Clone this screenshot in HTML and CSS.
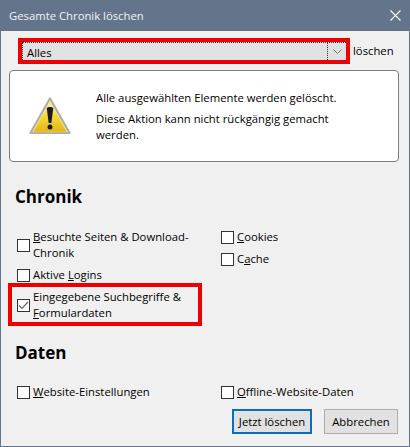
FILE: index.html
```html
<!DOCTYPE html>
<html lang="de">
<head>
    <title>Gesamte Chronik löschen</title>
    <meta charset="UTF-8">
    <link rel="stylesheet" href="styles.css">
</head>
<body>
    <div class="window">
        <div class="titlebar">
            <span>Gesamte Chronik löschen</span>
            <svg class="close" width="11" height="11" viewBox="0 0 11 11"><path d="M0.5 0.5L10.5 10.5M10.5 0.5L0.5 10.5" stroke="#fff" stroke-width="1.1" fill="none"/></svg>
        </div>
        <div class="content">
            <div class="range_row">
                <div class="red_frame range_frame">
                    <div class="select">
                        <div class="select_value">Alles</div>
                        <div class="select_arrow">
                            <svg width="9" height="5" viewBox="0 0 9 5"><path d="M0.5 0.5L4.5 4.5L8.5 0.5" stroke="#777" fill="none"/></svg>
                        </div>
                    </div>
                </div>
                <span class="range_label">löschen</span>
            </div>

            <div class="warning">
                <svg class="warning_icon" width="44" height="40" viewBox="0 0 44 40">
                    <defs>
                        <linearGradient id="warn_fill" x1="0" y1="0" x2="0" y2="1">
                            <stop offset="0" stop-color="#fdf3b0"/>
                            <stop offset="0.45" stop-color="#f6dc38"/>
                            <stop offset="1" stop-color="#e3b614"/>
                        </linearGradient>
                    </defs>
                    <path d="M22 2.5L41.5 37H2.5Z" fill="#fff" stroke="#b0ac9e" stroke-width="2.2" stroke-linejoin="round"/>
                    <path d="M22 5.5L39 36H5Z" fill="url(#warn_fill)" stroke="#e8d88a" stroke-width="0.6" stroke-linejoin="round"/>
                    <path d="M18.8 12.5C18.8 10.5 25.2 10.5 25.2 12.5L23.4 27H20.6Z" fill="#1c1c1c"/>
                    <circle cx="22" cy="31" r="2.5" fill="#1c1c1c"/>
                </svg>
                <div class="warning_text">
                    <p>Alle ausgewählten Elemente werden gelöscht.</p>
                    <p>Diese Aktion kann nicht rückgängig gemacht werden.</p>
                </div>
            </div>

            <h2 class="chronik_title">Chronik</h2>
            <div class="options">
                <div class="col_left">
                    <label class="option"><span class="check"></span><span class="opt_text"><u>B</u>esuchte Seiten &amp; Download-Chronik</span></label>
                    <label class="option"><span class="check"></span><span class="opt_text">Aktive <u>L</u>ogins</span></label>
                    <div class="red_frame form_frame">
                        <label class="option"><span class="check">
                            <svg width="13" height="13" viewBox="0 0 13 13"><path d="M2 6.5L5 9.5L11 3" stroke="#666" stroke-width="1.2" fill="none"/></svg>
                        </span><span class="opt_text">Eingegebene Suchbegriffe &amp; <u>F</u>ormulardaten</span></label>
                    </div>
                </div>
                <div class="col_right">
                    <label class="option"><span class="check"></span><span class="opt_text"><u>C</u>ookies</span></label>
                    <label class="option"><span class="check"></span><span class="opt_text">C<u>a</u>che</span></label>
                </div>
            </div>

            <h2 class="daten_title">Daten</h2>
            <div class="options">
                <div class="col_left">
                    <label class="option"><span class="check"></span><span class="opt_text"><u>W</u>ebsite-Einstellungen</span></label>
                </div>
                <div class="col_right">
                    <label class="option"><span class="check"></span><span class="opt_text"><u>O</u>ffline-Website-Daten</span></label>
                </div>
            </div>

            <div class="buttons">
                <button class="btn btn_default">Jetzt löschen</button>
                <button class="btn">Abbrechen</button>
            </div>
        </div>
    </div>
</body>
</html>
```

FILE: styles.css
```css
* {
    box-sizing: border-box;
}

html, body {
    margin: 0;
    height: 100%;
}

body {
    font-family: "Open Sans", "Noto Sans", sans-serif;
    font-size: 11.3px;
    color: #000;
}

.window {
    width: 410px;
    height: 447px;
    display: flex;
    flex-direction: column;
    background-color: #f0f0f0;
    border: 1px solid #64748a;
    border-top: none;
}

.titlebar {
    height: 31px;
    flex: none;
    margin: 0 -1px;
    padding: 0 9px;
    display: flex;
    align-items: center;
    justify-content: space-between;
    background-color: #64748a;
    color: #f2f4f6;
}

.content {
    flex: 1;
    padding: 7px 10px 0 8px;
}

.red_frame {
    border: 4px solid #ee0000;
}

.range_row {
    display: flex;
    align-items: center;
    gap: 3px;
    padding-left: 9px;
}

.range_frame {
    width: 332px;
    height: 26px;
}

.select {
    height: 100%;
    display: flex;
    background-color: #e1e1e1;
    border-left: 1px dotted #333;
    border-top: 1px dotted #333;
}

.select_value {
    flex: 1;
    padding-left: 4px;
    line-height: 19px;
    border-right: 1px dotted #333;
}

.select_arrow {
    width: 18px;
    display: flex;
    align-items: center;
    justify-content: center;
}

.range_label {
    margin-top: -2px;
}

.warning {
    height: 92px;
    margin-top: 6px;
    display: flex;
    align-items: center;
    background-color: #fff;
    border: 1px solid #7d7d7d;
    border-radius: 4px;
}

.warning_icon {
    flex: none;
    margin: 0 24px 0 18px;
}

.warning_text {
    width: 275px;
    line-height: 16px;
}

.warning_text p {
    margin: 0 0 5px 0;
}

.warning_text p:last-child {
    margin-bottom: 0;
}

h2 {
    margin: 0;
    font-size: 17px;
    font-weight: 700;
    padding-left: 6px;
}

.chronik_title {
    margin-top: 23px;
    line-height: 23px;
}

.daten_title {
    margin-top: 15px;
    line-height: 23px;
}

.options {
    display: flex;
    margin-top: 21px;
}

.daten_title + .options {
    margin-top: 20px;
}

.col_left {
    width: 212px;
    padding-left: 8px;
    display: flex;
    flex-direction: column;
    gap: 6px;
}

.col_right {
    display: flex;
    flex-direction: column;
    gap: 6px;
}

.option {
    display: flex;
    align-items: center;
    gap: 3px;
    line-height: 16px;
}

.opt_text {
    width: 168px;
}

.col_right .opt_text {
    width: auto;
}

.check {
    flex: none;
    width: 13px;
    height: 13px;
    border: 1px solid #333;
    background-color: #fff;
    display: flex;
    align-items: center;
    justify-content: center;
}

.check svg {
    flex: none;
    margin: -1px;
}

.form_frame {
    width: 194px;
    margin: -6px 0 0 -9px;
    padding: 2px 0 1px 5px;
}

.buttons {
    display: flex;
    justify-content: flex-end;
    gap: 12px;
    margin: 9px 1px 0 0;
}

.btn {
    width: 74px;
    height: 25px;
    padding: 0;
    font: inherit;
    color: #000;
    background-color: #e1e1e1;
    border: 1px solid #adadad;
}

.btn_default {
    width: 80px;
    border: 2px solid #0f6cbd;
}
```
